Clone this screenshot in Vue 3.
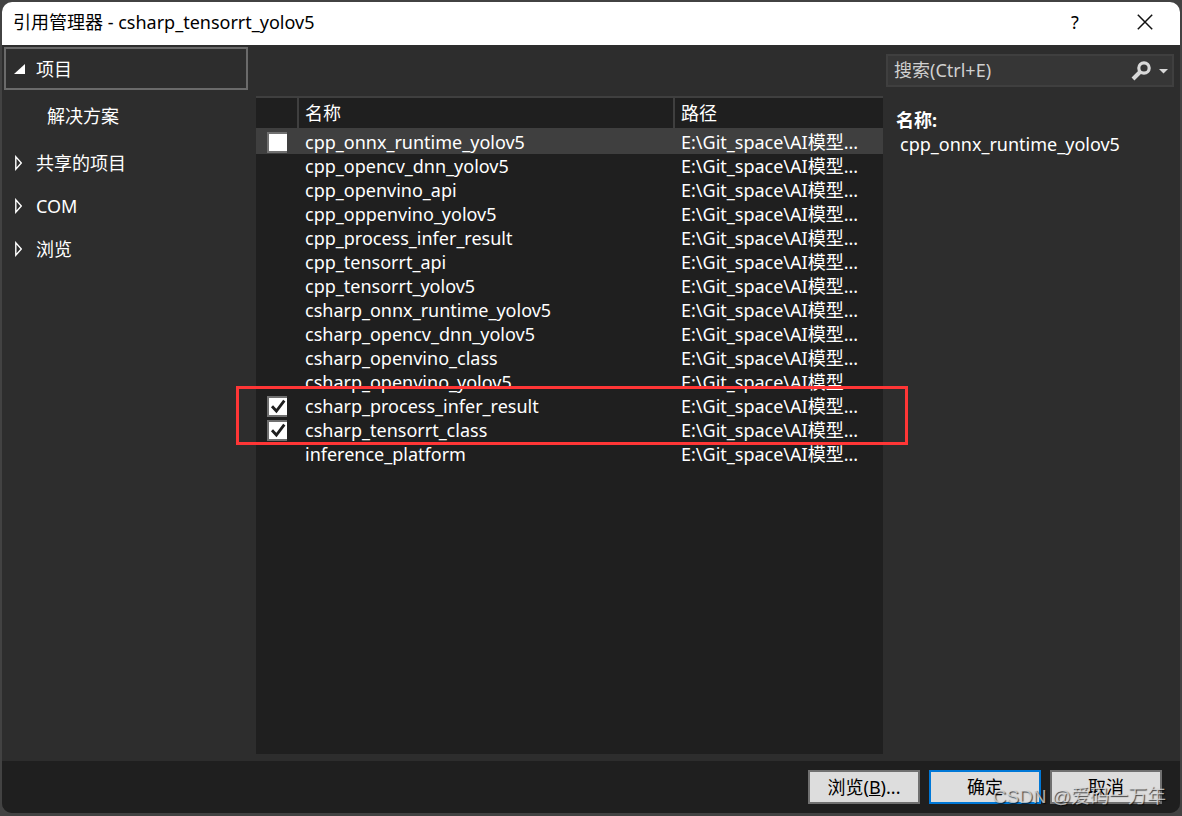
<script setup>
import { ref } from 'vue'

const query = ref('')
const selected = ref(0)
const path = 'E:\\Git_space\\AI模型...'
const projects = ref([
  { name: 'cpp_onnx_runtime_yolov5', checked: false },
  { name: 'cpp_opencv_dnn_yolov5', checked: false },
  { name: 'cpp_openvino_api', checked: false },
  { name: 'cpp_oppenvino_yolov5', checked: false },
  { name: 'cpp_process_infer_result', checked: false },
  { name: 'cpp_tensorrt_api', checked: false },
  { name: 'cpp_tensorrt_yolov5', checked: false },
  { name: 'csharp_onnx_runtime_yolov5', checked: false },
  { name: 'csharp_opencv_dnn_yolov5', checked: false },
  { name: 'csharp_openvino_class', checked: false },
  { name: 'csharp_openvino_yolov5', checked: false },
  { name: 'csharp_process_infer_result', checked: true },
  { name: 'csharp_tensorrt_class', checked: true },
  { name: 'inference_platform', checked: false },
])
const groups = ['共享的项目', 'COM', '浏览']
</script>

<template>
  <div class="desktop">
    <main class="dialog">
      <header class="titlebar">
        <h1>引用管理器 - csharp_tensorrt_yolov5</h1>
        <button type="button" class="caption-btn" aria-label="帮助">?</button>
        <button type="button" class="caption-btn" aria-label="关闭">
          <svg width="16" height="16" viewBox="0 0 16 16"><path d="M.8.8 15.2 15.2M15.2.8.8 15.2" stroke="#111" stroke-width="1.5" fill="none" /></svg>
        </button>
      </header>

      <div class="body">
        <nav class="sidebar">
          <button type="button" class="group current">
            <svg width="12" height="12" viewBox="0 0 12 12"><path d="M11 1v10H0z" fill="#fff" /></svg>
            <span>项目</span>
          </button>
          <button type="button" class="child">解决方案</button>
          <button v-for="g in groups" :key="g" type="button" class="group">
            <svg width="12" height="16" viewBox="0 0 12 16"><path d="M1.8 1.8v12.4L7.3 8z" fill="none" stroke="#fff" stroke-width="1.4" /></svg>
            <span>{{ g }}</span>
          </button>
        </nav>

        <section class="list">
          <table>
            <colgroup><col class="c-check"><col><col class="c-path"></colgroup>
            <thead>
              <tr><th></th><th>名称</th><th>路径</th></tr>
            </thead>
            <tbody>
              <tr v-for="(p, i) in projects" :key="p.name" :class="{ selected: i === selected }" @click="selected = i">
                <td class="check">
                  <input v-if="p.checked || i === selected" v-model="p.checked" type="checkbox" :aria-label="p.name">
                  <svg v-if="p.checked" class="tick" width="16" height="16" viewBox="0 0 16 16"><path d="M2 8.2 6.4 13 14.3 2.600" fill="none" stroke="#1e1e1e" stroke-width="2.8" /></svg>
                </td>
                <td>{{ p.name }}</td>
                <td>{{ path }}</td>
              </tr>
            </tbody>
          </table>
          <div class="marker"></div>
        </section>

        <aside class="details">
          <div class="search">
            <input v-model="query" type="text" placeholder="搜索(Ctrl+E)" aria-label="搜索">
            <button type="button" aria-label="搜索选项">
              <svg width="40" height="22" viewBox="0 0 40 22"><circle cx="15" cy="8" r="5.2" fill="none" stroke="#d8d8d8" stroke-width="3.2" /><path d="M11.500 11.500 4 19" stroke="#d8d8d8" stroke-width="4" /><path d="M30 9h9l-4.500 4.500z" fill="#d8d8d8" /></svg>
            </button>
          </div>
          <dl>
            <dt>名称:</dt>
            <dd>{{ projects[selected].name }}</dd>
          </dl>
        </aside>
      </div>

      <footer class="footer">
        <button type="button">浏览(<u>B</u>)...</button>
        <button type="button" class="primary">确定</button>
        <button type="button">取消</button>
      </footer>
    </main>
    <div class="watermark">CSDN @爱码一万年</div>
  </div>
</template>

<style>
body { margin: 0; background: #474747; }
</style>

<style scoped>
* { box-sizing: border-box; }
.desktop {
  position: relative;
  display: flex;
  min-height: 100vh;
  padding: 2px 2px 3px;
  background: #424242;
  color: #fff;
  font: 18px/24px "Noto Sans", "Noto Sans CJK SC", sans-serif;
}
button, input { font: inherit; color: inherit; }
svg { display: block; flex: none; }
.dialog {
  flex: 1;
  display: flex;
  flex-direction: column;
  min-width: 0;
  border-radius: 10px;
  overflow: hidden;
  background: #2d2d2d;
}
.titlebar {
  display: flex;
  align-items: center;
  height: 43px;
  padding: 0 0 3px 11px;
  background: #fff;
  color: #000;
}
h1 { flex: 1; margin: 0; font-size: 18px; font-weight: 400; }
.caption-btn {
  display: flex;
  align-items: center;
  justify-content: center;
  width: 70px;
  height: 40px;
  padding: 0;
  border: 0;
  background: none;
}
.body {
  flex: 1;
  display: grid;
  grid-template-columns: 254px minmax(0, 1fr) 297px;
}
.sidebar { display: flex; flex-direction: column; padding: 2px 8px 0 2px; }
.group, .child {
  display: flex;
  align-items: center;
  height: 43px;
  padding: 0 0 0 8px;
  border: 2px solid transparent;
  background: none;
  text-align: left;
}
.group { gap: 10px; }
.group.current { border-color: #6a6a6a; }
.child { height: 51px; padding-left: 41px; }
.list {
  position: relative;
  margin: 51px 0 7px;
  background: #1f1f1f;
}
table { width: 100%; border-collapse: separate; border-spacing: 0; table-layout: fixed; }
.c-check { width: 43px; }
.c-path { width: 208px; }
th {
  height: 34px;
  padding: 0 6px;
  border: 2px solid #3f3f3f;
  border-left: 0;
  font-weight: 400;
  text-align: left;
}
th:last-child { border-right: 0; }
td { height: 24px; padding: 0 6px; white-space: nowrap; overflow: hidden; }
.selected td { background: #3f3f3f; }
.check { position: relative; padding: 0 0 0 11px; }
.check input {
  display: block;
  appearance: none;
  width: 20px;
  height: 21px;
  margin: 0;
  border: 2px solid #707070;
  border-right: 0;
  background: #fff;
}
.tick { position: absolute; left: 14px; top: 4px; pointer-events: none; }
.marker {
  position: absolute;
  left: -20px;
  right: -25px;
  top: 290px;
  height: 59px;
  border: 3px solid #ff3636;
  pointer-events: none;
}
.details { padding: 9px 6px 0 3px; }
.search {
  display: flex;
  align-items: center;
  height: 33px;
  border: 2px solid #3f3f3f;
  background: #363636;
}
.search input {
  flex: 1;
  min-width: 0;
  padding: 0 0 2px 6px;
  border: 0;
  outline: 0;
  background: none;
}
.search input::placeholder { color: #d0d0d0; opacity: 1; }
.search button { padding: 0 3px 0 0; border: 0; background: none; }
dl { margin: 22px 0 0 10px; }
dt { font-weight: 700; line-height: 23px; }
dd { margin: 0 0 0 4px; }
.footer {
  display: flex;
  justify-content: flex-end;
  gap: 9px;
  height: 52px;
  padding: 9px 18px 0;
  background: #1f1f1f;
}
.footer button {
  width: 112px;
  height: 34px;
  padding: 0;
  border: 2px solid #707070;
  background: #ddd;
  color: #000;
}
.footer .primary { border-color: #0078d7; }
.watermark {
  position: absolute;
  right: 16px;
  bottom: 7px;
  color: rgba(225, 225, 225, .75);
  text-shadow: 1px 1px 1px rgba(0, 0, 0, .7);
  font: 19px/24px "Liberation Sans", "Noto Sans CJK SC", sans-serif;
  pointer-events: none;
}
</style>
